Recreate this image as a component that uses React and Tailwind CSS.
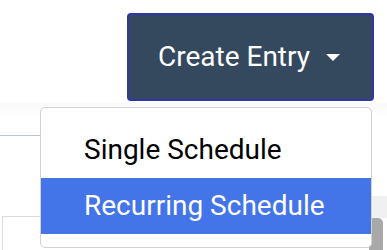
import React from "react";

export default function App() {
  return (
    <div className="relative w-[387px] h-[250px] overflow-hidden bg-white flex flex-col" style={{ fontFamily: "Roboto, 'Liberation Sans', sans-serif" }}>
      {/* header row */}
      <div className="flex justify-end pt-[13px] pr-[13px]">
        <button className="flex items-center w-[247px] h-[88px] pl-[29px] bg-[#34495e] border-2 border-[#3035a8] rounded-[4px] text-white text-[28px] leading-none">
          <span>Create Entry</span>
          <svg width="14" height="8" viewBox="0 0 14 8" className="ml-[16px] mt-[1px]">
            <path d="M0 0 L14 0 L7 7 Z" fill="white" />
          </svg>
        </button>
      </div>
      {/* background content */}
      <div className="mt-[2px] h-[14px] bg-gradient-to-b from-[#f9f9fa] to-white"></div>
      <div className="mt-[18px] w-[44px] h-px bg-[#b9c3d6]"></div>
      <div className="flex items-end justify-between mt-[60px] flex-1">
        <div className="ml-[2px] w-[60px] h-[34px] border-l border-t border-[#dcdcdc]"></div>
        <div className="flex flex-col items-end h-full">
          <div className="w-[16px] h-[22px] bg-[#f0f0f0]"></div>
          <div className="mr-[4px] w-[14px] flex-1 rounded-t-[5px] bg-[#a8a8a8]"></div>
        </div>
      </div>
      {/* dropdown menu */}
      <div className="absolute left-[40px] top-[107px] w-[332px] h-[141px] bg-white border border-[#d2d2d2] rounded-[5px] pt-[14px] overflow-hidden">
        <div className="h-[56px] flex items-center pl-[43px] text-[28px] text-black leading-none">Single Schedule</div>
        <div className="h-[56px] flex items-center pl-[43px] text-[28px] text-white bg-[#4374e8] leading-none">Recurring Schedule</div>
      </div>
    </div>
  );
}
